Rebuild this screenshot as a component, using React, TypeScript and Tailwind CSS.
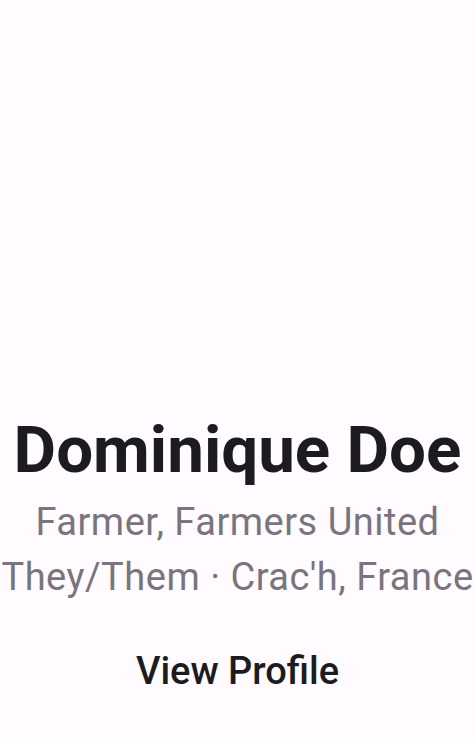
export default function App() {
  return (
    <div
      className="flex h-[737px] w-full flex-col items-center justify-end overflow-hidden bg-[#fffbfe] pb-[21px] text-center"
      style={{ fontFamily: 'Roboto, "Noto Sans", sans-serif' }}
    >
      <h1 className="whitespace-nowrap text-[65.5px] font-bold leading-[76px] text-[#1c1b1f]">
        Dominique Doe
      </h1>
      <p className="mt-[7px] whitespace-nowrap text-[38px] leading-[55px] tracking-[0.5px] text-[#79747e]">
        Farmer, Farmers United
      </p>
      <p className="whitespace-nowrap text-[38px] leading-[55px] tracking-[0.5px] text-[#79747e]">
        They/Them · Crac&apos;h, France
      </p>
      <button
        type="button"
        className="mt-[21px] h-[90px] whitespace-nowrap rounded-full px-[36px] text-[38px] font-medium leading-[90px] text-[#1c1b1f]"
      >
        View Profile
      </button>
    </div>
  )
}
